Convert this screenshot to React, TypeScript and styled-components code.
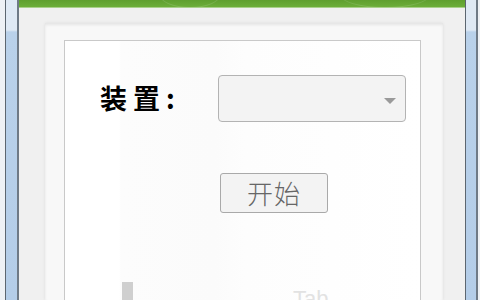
import React, { useState } from "react";
import styled, { createGlobalStyle } from "styled-components";

const GlobalStyle = createGlobalStyle`
  html, body {
    margin: 0;
    padding: 0;
    width: 480px;
    height: 300px;
    overflow: hidden;
    background: #f0f0f0;
    font-family: "Liberation Sans", "Noto Sans CJK SC", sans-serif;
  }
`;

const Screen = styled.div`
  display: flex;
  width: 480px;
  height: 300px;
`;

const Frame = styled.div<{ $side: "left" | "right" }>`
  flex: none;
  width: ${(p) => (p.$side === "left" ? "19px" : "15px")};
  display: flex;
  flex-direction: ${(p) => (p.$side === "left" ? "row" : "row-reverse")};
`;

const FrameEdge = styled.div<{ $w: number }>`
  width: ${(p) => p.$w}px;
  background: #eef1f5;
`;

const FrameGlass = styled.div`
  flex: 1;
  border-left: 1px solid #5c6670;
  border-right: 2px solid #6f7a86;
  background: linear-gradient(
    to bottom,
    #dfe9f4 0px,
    #dfe9f4 30px,
    #b9d1ea 32px,
    #b4cde8 100%
  );
`;

const Window = styled.div`
  flex: 1;
  display: flex;
  flex-direction: column;
  min-width: 0;
`;

const TitleBar = styled.div`
  position: relative;
  height: 7px;
  flex: none;
  background: linear-gradient(to bottom, #5f9f2f, #6cae39);
  border-bottom: 1px solid #a9d08a;
  overflow: hidden;
`;

const Glow = styled.span<{ $x: number; $w: number }>`
  position: absolute;
  left: ${(p) => p.$x}px;
  top: -20px;
  width: ${(p) => p.$w}px;
  height: 26px;
  border-radius: 50%;
  border: 1px solid rgba(255, 255, 255, 0.12);
`;

const Body = styled.div`
  flex: 1;
  background: #f0f0f0;
  padding: 15px 22px 0 26px;
  display: flex;
  min-height: 0;
`;

const Panel = styled.div`
  flex: 1;
  background: #f8f8f8;
  box-shadow: inset 0 2px 3px rgba(0, 0, 0, 0.08), 0 0 3px rgba(0, 0, 0, 0.08);
  padding: 17px 22px 0 19px;
  display: flex;
  min-height: 0;
`;

const Card = styled.div`
  flex: 1;
  background: linear-gradient(
    to right,
    #ffffff 0px,
    #ffffff 54px,
    #fcfcfc 56px,
    #fbfbfb 150px,
    #fdfdfd 180px,
    #ffffff 100%
  );
  border: 1px solid #c9c9c9;
  border-bottom: none;
  padding: 34px 0 0 35px;
  display: flex;
  flex-direction: column;
  min-height: 0;
`;

const FormGrid = styled.div`
  display: grid;
  grid-template-columns: 118px 188px;
  row-gap: 51px;
  align-items: center;
`;

const Label = styled.div`
  font-family: "Noto Sans CJK SC", sans-serif;
  font-weight: 700;
  font-size: 27px;
  letter-spacing: 6px;
  color: #000;
  line-height: 1;
  margin-top: -3px;
`;

const SelectBox = styled.div`
  position: relative;
  height: 47px;
  box-sizing: border-box;
  border: 1px solid #b3b3b3;
  border-radius: 4px;
  background: #f3f3f3;
`;

const Caret = styled.span`
  position: absolute;
  right: 9px;
  top: 22px;
  width: 0;
  height: 0;
  border-left: 6px solid transparent;
  border-right: 6px solid transparent;
  border-top: 6px solid #9a9a9a;
`;

const StartButton = styled.button`
  grid-column: 2;
  justify-self: start;
  margin-left: 2px;
  width: 108px;
  height: 40px;
  box-sizing: border-box;
  border: 1px solid #a9a9a9;
  border-radius: 3px;
  background: #f3f3f3;
  color: #666;
  font-family: "Noto Sans CJK SC", sans-serif;
  font-size: 26px;
  font-weight: 300;
  letter-spacing: 1px;
  line-height: 1;
  padding: 0;
  cursor: pointer;
`;

const Footer = styled.div`
  display: flex;
  align-items: flex-start;
  margin-top: 69px;
  padding-left: 22px;
  gap: 160px;
`;

const Bar = styled.div`
  width: 11px;
  height: 30px;
  background: #cfcfcf;
`;

const Faint = styled.span`
  font-family: "Liberation Sans", sans-serif;
  font-size: 22px;
  line-height: 1;
  color: #e2e2e2;
  margin-top: 6px;
`;

export default function App() {
  const [started, setStarted] = useState(false);

  return (
    <>
      <GlobalStyle />
      <Screen>
        <Frame $side="left">
          <FrameEdge $w={5} />
          <FrameGlass />
        </Frame>
        <Window>
          <TitleBar>
            <Glow $x={140} $w={60} />
            <Glow $x={320} $w={90} />
          </TitleBar>
          <Body>
            <Panel>
              <Card>
                <FormGrid>
                  <Label>装置:</Label>
                  <SelectBox>
                    <Caret />
                  </SelectBox>
                  <StartButton onClick={() => setStarted(!started)}>
                    开始
                  </StartButton>
                </FormGrid>
                <Footer>
                  <Bar />
                  <Faint>Tab</Faint>
                </Footer>
              </Card>
            </Panel>
          </Body>
        </Window>
        <Frame $side="right">
          <FrameEdge $w={2} />
          <FrameGlass />
        </Frame>
      </Screen>
    </>
  );
}
